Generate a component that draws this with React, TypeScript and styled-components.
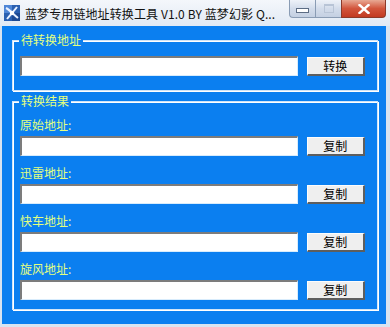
import React from "react";
import styled, { createGlobalStyle } from "styled-components";

const GlobalStyle = createGlobalStyle`
  html, body {
    margin: 0;
    padding: 0;
    width: 390px;
    height: 327px;
    overflow: hidden;
  }
  body {
    font-family: "Noto Sans CJK SC", "Liberation Sans", sans-serif;
    font-size: 12px;
  }
`;

const rows = ["原始地址:", "迅雷地址:", "快车地址:", "旋风地址:"];

export default function App() {
  return (
    <>
      <GlobalStyle />
      <StyledWindow>
        <StyledTitleBar>
          <AppIcon />
          <StyledTitle>蓝梦专用链地址转换工具 V1.0 BY 蓝梦幻影 Q...</StyledTitle>
          <StyledControls>
            <StyledCtrl>
              <StyledMinGlyph />
            </StyledCtrl>
            <StyledCtrl>
              <StyledMaxGlyph />
            </StyledCtrl>
            <StyledClose>
              <svg width="12" height="10" viewBox="0 0 12 10">
                <path
                  d="M1.5 1 L10.5 9 M10.5 1 L1.5 9"
                  stroke="#fff"
                  strokeWidth="2.4"
                  strokeLinecap="square"
                />
              </svg>
            </StyledClose>
          </StyledControls>
        </StyledTitleBar>
        <StyledClient>
          <StyledGroup>
            <StyledLegend>待转换地址</StyledLegend>
            <StyledRow>
              <StyledInput />
              <StyledButton>转换</StyledButton>
            </StyledRow>
          </StyledGroup>
          <StyledGroup $tall>
            <StyledLegend>转换结果</StyledLegend>
            {rows.map((label) => (
              <StyledField key={label}>
                <StyledLabel>{label}</StyledLabel>
                <StyledRow>
                  <StyledInput />
                  <StyledButton>复制</StyledButton>
                </StyledRow>
              </StyledField>
            ))}
          </StyledGroup>
        </StyledClient>
      </StyledWindow>
    </>
  );
}

function AppIcon() {
  return (
    <svg width="16" height="16" viewBox="0 0 16 16">
      <rect x="0" y="0" width="16" height="16" fill="#2a5fb0" />
      <rect x="0" y="0" width="8" height="8" fill="#4f86d6" />
      <rect x="8" y="8" width="8" height="8" fill="#1d4a94" />
      <path
        d="M2 3 C6 5 9 9 14 13 M13 2 C10 6 7 9 3 14"
        stroke="#e8f0ff"
        strokeWidth="2"
        fill="none"
      />
      <circle cx="8" cy="8" r="2.2" fill="#ffffff" />
    </svg>
  );
}

const StyledWindow = styled.div`
  width: 390px;
  height: 327px;
  display: flex;
  flex-direction: column;
  background: #d9e4f1;
  box-sizing: border-box;
  padding: 0 4px 3px 2px;
`;

const StyledTitleBar = styled.div`
  height: 26px;
  display: flex;
  align-items: center;
  padding-left: 4px;
  background: linear-gradient(#f4f7fb, #e2eaf4);
  margin: 0 -4px 0 -2px;
  padding-right: 4px;
`;

const StyledTitle = styled.div`
  margin-left: 5px;
  color: #111;
  font-size: 12px;
  white-space: nowrap;
  flex: 1;
  letter-spacing: 0.1px;
`;

const StyledControls = styled.div`
  display: flex;
  align-self: flex-start;
  height: 19px;
`;

const StyledCtrl = styled.div`
  width: 26px;
  height: 18px;
  box-sizing: border-box;
  border: 1px solid #8a9cb4;
  border-top: none;
  border-right: none;
  background: linear-gradient(#eef2f8, #d3dceb 50%, #c4d0e2);
  display: flex;
  align-items: center;
  justify-content: center;
  &:first-child {
    border-bottom-left-radius: 4px;
  }
`;

const StyledMinGlyph = styled.div`
  width: 11px;
  height: 3px;
  margin-top: 4px;
  background: #fff;
  border: 1px solid #5c6c84;
`;

const StyledMaxGlyph = styled.div`
  width: 8px;
  height: 6px;
  border: 1px solid #b8c4d6;
  border-top-width: 2px;
`;

const StyledClose = styled.div`
  width: 45px;
  height: 18px;
  box-sizing: border-box;
  border: 1px solid #8c3a2a;
  border-top: none;
  border-bottom-right-radius: 4px;
  background: linear-gradient(#e8a893, #d2553c 50%, #c23a22);
  display: flex;
  align-items: center;
  justify-content: center;
`;

const StyledClient = styled.div`
  flex: 1;
  background: #0b7ff0;
  display: flex;
  flex-direction: column;
  gap: 10px;
  padding: 14px 8px 0 10px;
`;

const StyledGroup = styled.div<{ $tall?: boolean }>`
  position: relative;
  border: 1px solid #d0e4f8;
  box-shadow: inset 1px 1px 0 #ffffff, 1px 1px 0 #ffffff;
  padding: ${(p) => (p.$tall ? "16px 12px 9px 7px" : "15px 12px 14px 7px")};
  display: flex;
  flex-direction: column;
  gap: 10px;
`;

const StyledLegend = styled.div`
  position: absolute;
  top: -8px;
  left: 6px;
  padding: 0 2px;
  background: #0b7ff0;
  color: #e4ff80;
  font-size: 12px;
  line-height: 14px;
`;

const StyledField = styled.div`
  display: flex;
  flex-direction: column;
  gap: 4px;
`;

const StyledLabel = styled.div`
  color: #e4ff80;
  font-size: 12px;
  line-height: 14px;
`;

const StyledRow = styled.div`
  display: flex;
  align-items: center;
  gap: 9px;
`;

const StyledInput = styled.div`
  width: 280px;
  height: 20px;
  box-sizing: border-box;
  background: #fff;
  border-style: solid;
  border-width: 2px 1px 1px 2px;
  border-color: #7c7c7c #d8ecfc #d8ecfc #7c7c7c;
`;

const StyledButton = styled.button`
  width: 59px;
  height: 19px;
  box-sizing: border-box;
  padding: 0;
  background: #efefef;
  border-style: solid;
  border-width: 1px 2px 2px 1px;
  border-color: #fcfcfc #5e5e5e #5e5e5e #fcfcfc;
  font-family: "Noto Sans CJK SC", sans-serif;
  font-size: 12px;
  line-height: 15px;
  color: #000;
`;
